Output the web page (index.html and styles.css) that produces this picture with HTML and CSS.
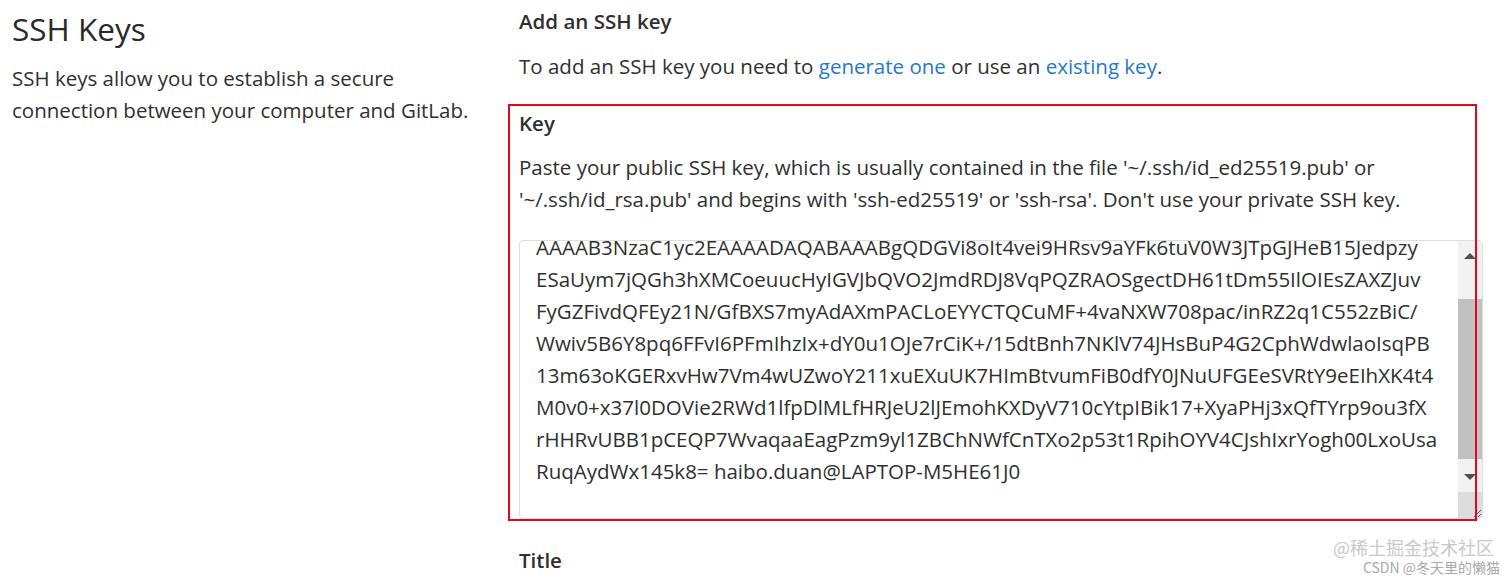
FILE: index.html
```html
<!DOCTYPE html>
<html lang="en">
<head>
<meta charset="utf-8">
<title>SSH Keys</title>
<link rel="stylesheet" href="styles.css">
</head>
<body>
<div class="page">
  <section class="intro">
    <h4 class="intro-title">SSH Keys</h4>
    <p class="intro-text">SSH keys allow you to establish a secure connection between your computer and GitLab.</p>
  </section>
  <section class="main">
    <h5 class="main-title">Add an SSH key</h5>
    <p class="main-text">To add an SSH key you need to <a class="link" href="#">generate one</a> or use an <a class="link" href="#">existing key</a>.</p>
    <div class="field">
      <label class="label">Key</label>
      <p class="help">Paste your public SSH key, which is usually contained in the file '~/.ssh/id_ed25519.pub' or '~/.ssh/id_rsa.pub' and begins with 'ssh-ed25519' or 'ssh-rsa'. Don't use your private SSH key.</p>
      <div class="textarea">
        <div class="ta-view">
          <div class="ta-text">
            <div class="ta-line">AAAAB3NzaC1yc2EAAAADAQABAAABgQDGVi8oIt4vei9HRsv9aYFk6tuV0W3JTpGJHeB15Jedpzy</div>
            <div class="ta-line">ESaUym7jQGh3hXMCoeuucHyIGVJbQVO2JmdRDJ8VqPQZRAOSgectDH61tDm55IlOIEsZAXZJuv</div>
            <div class="ta-line">FyGZFivdQFEy21N/GfBXS7myAdAXmPACLoEYYCTQCuMF+4vaNXW708pac/inRZ2q1C552zBiC/</div>
            <div class="ta-line">Wwiv5B6Y8pq6FFvI6PFmIhzIx+dY0u1OJe7rCiK+/15dtBnh7NKlV74JHsBuP4G2CphWdwlaoIsqPB</div>
            <div class="ta-line">13m63oKGERxvHw7Vm4wUZwoY211xuEXuUK7HImBtvumFiB0dfY0JNuUFGEeSVRtY9eEIhXK4t4</div>
            <div class="ta-line">M0v0+x37l0DOVie2RWd1lfpDlMLfHRJeU2lJEmohKXDyV710cYtpIBik17+XyaPHj3xQfTYrp9ou3fX</div>
            <div class="ta-line">rHHRvUBB1pCEQP7WvaqaaEagPzm9yl1ZBChNWfCnTXo2p53t1RpihOYV4CJshIxrYogh00LxoUsa</div>
            <div class="ta-line">RuqAydWx145k8= haibo.duan@LAPTOP-M5HE61J0</div>
          </div>
        </div>
        <div class="scrollbar">
          <div class="sb-btn"><span class="arrow-up"></span></div>
          <div class="sb-track"><div class="sb-thumb"></div></div>
          <div class="sb-btn"><span class="arrow-down"></span></div>
          <div class="sb-corner">
            <svg width="10" height="10" viewBox="0 0 10 10"><path d="M9 2 L2 9 M9 6 L6 9" stroke="#555" stroke-width="1" fill="none"/></svg>
          </div>
        </div>
      </div>
    </div>
    <label class="label title-label">Title</label>
  </section>
</div>
<div class="highlight"></div>
<div class="watermark">
  <div class="wm-main">@稀土掘金技术社区</div>
  <div class="wm-sub">CSDN @冬天里的懒猫</div>
</div>
</body>
</html>
```

FILE: styles.css
```css
html, body {
  margin: 0;
  padding: 0;
  background: #fff;
}
body {
  font-family: "Open Sans", "Noto Sans", sans-serif;
  color: #2f2f2f;
  font-size: 20.5px;
  line-height: 32px;
  width: 1512px;
  height: 580px;
  overflow: hidden;
}
.page {
  display: grid;
  grid-template-columns: 507px 964px;
  padding-left: 12px;
}
.intro-title {
  margin: 11px 0 0;
  font-size: 31.5px;
  line-height: 36px;
  font-weight: 500;
  color: #2a2a2a;
}
.intro-text {
  margin: 15px 0 0;
  width: 470px;
}
.main {
  padding-top: 5px;
}
.main-title {
  margin: 0;
  font-size: 20.5px;
  line-height: 32px;
  font-weight: 600;
}
.main-text {
  margin: 13px 0 0;
}
.link {
  color: #1f78d1;
  text-decoration: none;
}
.field {
  margin-top: 25px;
  display: flex;
  flex-direction: column;
}
.label {
  display: block;
  font-weight: 600;
  line-height: 32px;
}
.help {
  margin: 12px 0 0;
}
.textarea {
  margin-top: 25px;
  height: 277px;
  border: 1px solid #dedede;
  border-radius: 4px;
  display: flex;
  overflow: hidden;
}
.ta-view {
  flex: 1;
  overflow: hidden;
  padding-left: 16px;
}
.ta-text {
  margin-top: -10px;
}
.ta-line {
  white-space: nowrap;
  line-height: 32px;
}
.scrollbar {
  width: 24px;
  display: flex;
  flex-direction: column;
  background: #f1f1f1;
}
.sb-btn {
  height: 30px;
  display: flex;
  align-items: center;
  justify-content: center;
}
.arrow-up {
  width: 0;
  height: 0;
  border-left: 6px solid transparent;
  border-right: 6px solid transparent;
  border-bottom: 6px solid #505050;
}
.arrow-down {
  width: 0;
  height: 0;
  border-left: 6px solid transparent;
  border-right: 6px solid transparent;
  border-top: 6px solid #505050;
}
.sb-track {
  flex: 1;
  padding-top: 28px;
}
.sb-thumb {
  height: 160px;
  background: #c1c1c1;
}
.sb-corner {
  height: 26px;
  background: #dcdcdc;
  display: flex;
  align-items: flex-end;
  justify-content: flex-end;
}
.title-label {
  margin-top: 25px;
}
.highlight {
  position: absolute;
  left: 508px;
  top: 104px;
  width: 965px;
  height: 413px;
  border: 2px solid #e3061e;
  pointer-events: none;
}
.watermark {
  position: absolute;
  right: 12px;
  top: 535px;
  text-align: right;
  font-family: "Noto Sans CJK SC", sans-serif;
  pointer-events: none;
}
.wm-main {
  font-size: 18px;
  line-height: 24px;
  color: #c9c9c9;
  margin-right: 6px;
}
.wm-sub {
  font-size: 14px;
  line-height: 17px;
  color: #a9a9a9;
}
```
